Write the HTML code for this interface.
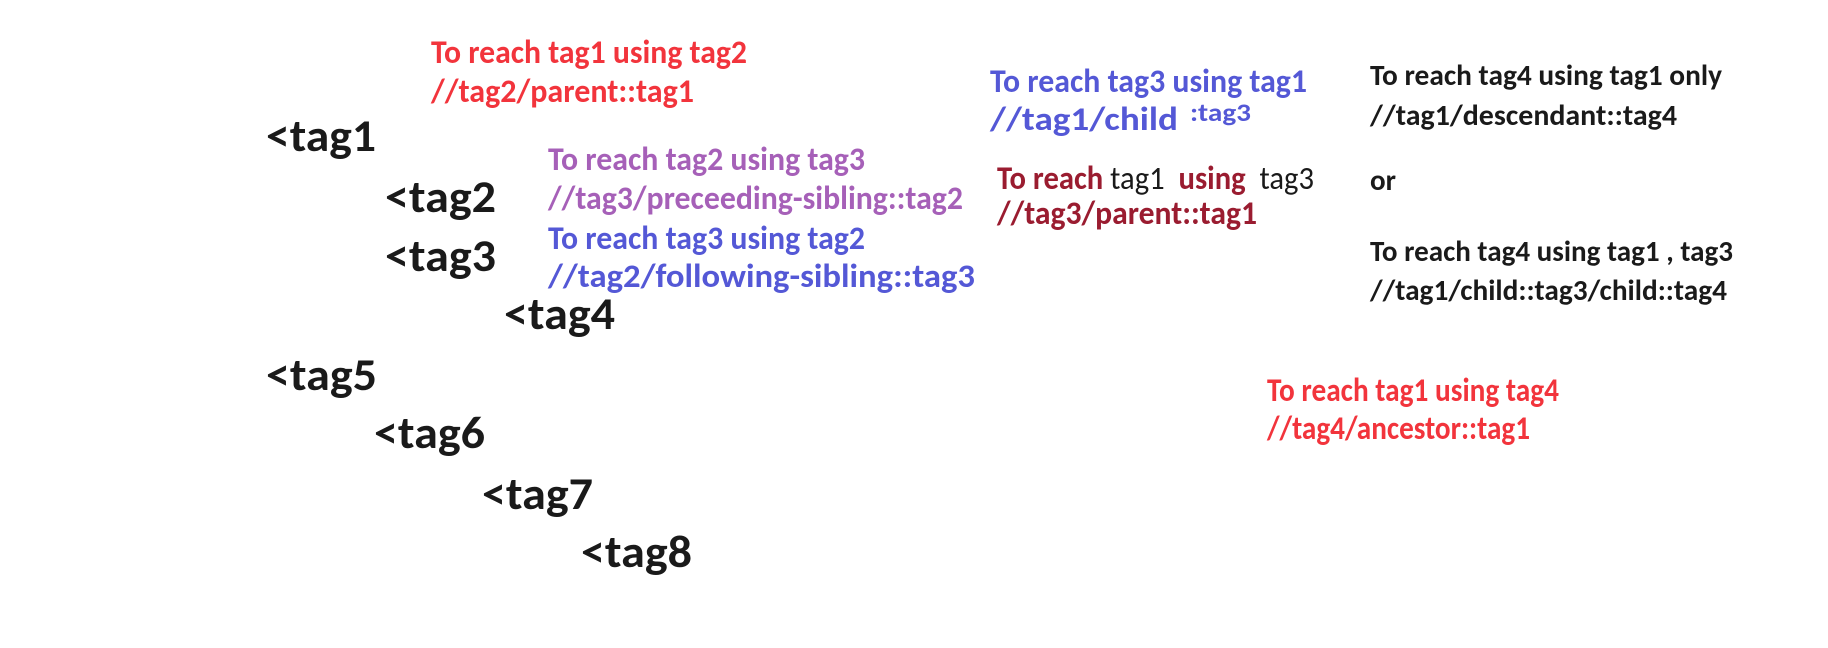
<!DOCTYPE html>
<html><head><meta charset="utf-8"><style>
html,body{margin:0;padding:0;background:#fff;width:1828px;height:648px;overflow:hidden}
.t{position:absolute;white-space:nowrap;font-family:"Calibri","Liberation Sans",sans-serif;font-weight:bold;line-height:1;transform-origin:0 0}
.r{color:#f2343c}.p{color:#a660b8}.b{color:#5458d6}.d{color:#9a1c30}.k{color:#1a1a1a}
.n{font-weight:normal;color:#1a1a1a}
</style></head><body>
<div class="t r" data-b="64" data-s="33" data-x="431" data-w="316">To reach tag1 using tag2</div>
<div class="t r" data-b="103" data-s="33" data-x="431" data-w="263">//tag2/parent::tag1</div>

<div class="t k" data-b="152" data-s="46" data-x="266" data-w="110">&lt;tag1</div>
<div class="t k" data-b="213" data-s="46" data-x="385" data-w="111">&lt;tag2</div>
<div class="t k" data-b="272" data-s="46" data-x="385" data-w="111">&lt;tag3</div>
<div class="t k" data-b="330" data-s="46" data-x="504" data-w="111">&lt;tag4</div>
<div class="t k" data-b="391" data-s="46" data-x="266" data-w="111">&lt;tag5</div>
<div class="t k" data-b="449" data-s="46" data-x="374" data-w="111">&lt;tag6</div>
<div class="t k" data-b="510" data-s="46" data-x="482" data-w="111">&lt;tag7</div>
<div class="t k" data-b="568" data-s="46" data-x="581" data-w="111">&lt;tag8</div>

<div class="t p" data-b="171" data-s="33" data-x="548" data-w="317">To reach tag2 using tag3</div>
<div class="t p" data-b="210" data-s="33" data-x="548" data-w="415">//tag3/preceeding-sibling::tag2</div>
<div class="t b" data-b="250" data-s="33" data-x="548" data-w="317">To reach tag3 using tag2</div>
<div class="t b" data-b="288" data-s="33" data-x="548" data-w="427">//tag2/following-sibling::tag3</div>

<div class="t b" data-b="93" data-s="33" data-x="990" data-w="317">To reach tag3 using tag1</div>
<div class="t b" data-b="131" data-s="33" data-x="990" data-w="188">//tag1/child</div>
<div class="t b" data-b="121" data-s="25" data-x="1190" data-w="61">:tag3</div>

<div class="t d" data-b="190" data-s="33" data-x="997" data-w="317">To reach <span class="n">tag1</span>&nbsp; using&nbsp; <span class="n">tag3</span></div>
<div class="t d" data-b="225" data-s="33" data-x="997" data-w="260">//tag3/parent::tag1</div>

<div class="t k" data-b="86" data-s="29" data-x="1370" data-w="352">To reach tag4 using tag1 only</div>
<div class="t k" data-b="126" data-s="29" data-x="1370" data-w="307">//tag1/descendant::tag4</div>
<div class="t k" data-b="191" data-s="29" data-x="1370" data-w="26">or</div>
<div class="t k" data-b="262" data-s="29" data-x="1370" data-w="363">To reach tag4 using tag1 , tag3</div>
<div class="t k" data-b="301" data-s="29" data-x="1370" data-w="357">//tag1/child::tag3/child::tag4</div>

<div class="t r" data-b="402" data-s="33" data-x="1267" data-w="292">To reach tag1 using tag4</div>
<div class="t r" data-b="440" data-s="33" data-x="1267" data-w="263">//tag4/ancestor::tag1</div>
<script>
document.querySelectorAll('.t').forEach(function(e){
 var s=+e.dataset.s;e.style.fontSize=s+'px';
 e.style.left=e.dataset.x+'px';
 e.style.top=(+e.dataset.b-0.85*s)+'px';
 var w=e.getBoundingClientRect().width;
 e.style.transform='scaleX('+(+e.dataset.w/w)+')';
});
</script>
</body></html>
